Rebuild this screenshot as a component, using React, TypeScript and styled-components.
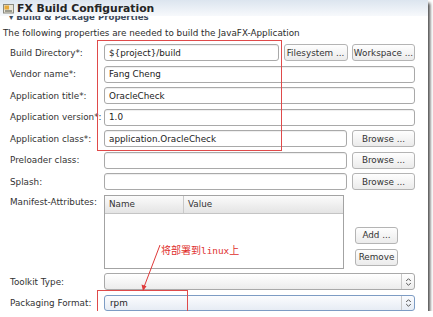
import React from "react";
import styled, { createGlobalStyle } from "styled-components";

const Global = createGlobalStyle`
  html, body { margin: 0; padding: 0; background: #fff; }
  body { font-family: "DejaVu Sans", sans-serif; }
`;

const Window = styled.div`
  position: relative;
  width: 428px;
  height: 311px;
  background: #fff;
  overflow: hidden;
  box-shadow: 2px 3px 3px rgba(0, 0, 0, 0.72);
  display: flex;
  flex-direction: column;
  font-family: "DejaVu Sans", sans-serif;
  font-size: 8.8px;
  color: #333;
`;

const Heading = styled.div`
  flex: none;
  height: 16px;
  display: flex;
  align-items: center;
  gap: 3px;
  padding-left: 3px;
  background: linear-gradient(#dce5ef, #f7f9fc);
  font-size: 10.8px;
  font-weight: bold;
  color: #252525;
`;

const SectionClip = styled.div`
  flex: none;
  height: 8px;
  overflow: hidden;
  padding-left: 9px;
`;

const SectionTitle = styled.div`
  margin-top: -4px;
  font-size: 8.6px;
  font-weight: bold;
  color: #3c4a5c;
  white-space: nowrap;
`;

const Description = styled.div`
  flex: none;
  margin-top: 3px;
  height: 12px;
  line-height: 12px;
  padding-left: 3px;
  color: #2c2c2c;
  white-space: nowrap;
`;

const Form = styled.div`
  margin-top: 5px;
  padding: 0 13px 0 10px;
  display: flex;
  flex-direction: column;
  gap: 4.5px;
`;

const Row = styled.div<{ $h?: number; $top?: boolean }>`
  display: grid;
  grid-template-columns: 94px 1fr;
  height: ${(p) => p.$h ?? 17}px;
  align-items: ${(p) => (p.$top ? "start" : "center")};
`;

const Label = styled.div<{ $pt?: number }>`
  white-space: nowrap;
  color: #333;
  padding-top: ${(p) => p.$pt ?? 0}px;
`;

const Field = styled.div<{ $gap?: number }>`
  display: flex;
  align-items: stretch;
  gap: ${(p) => p.$gap ?? 5}px;
  height: 100%;
  min-width: 0;
`;

const Input = styled.div`
  flex: 1;
  min-width: 0;
  box-sizing: border-box;
  border: 1px solid #a9a9a9;
  border-radius: 3px;
  background: #fff;
  box-shadow: inset 0 1px 1px rgba(0, 0, 0, 0.07);
  display: flex;
  align-items: center;
  padding-left: 4px;
  color: #222;
  white-space: nowrap;
  overflow: hidden;
`;

const Button = styled.div<{ $w: number }>`
  flex: none;
  width: ${(p) => p.$w}px;
  box-sizing: border-box;
  border: 1px solid #b4b4b4;
  border-radius: 3px;
  background: linear-gradient(#fefefe, #ebebeb);
  display: flex;
  align-items: center;
  justify-content: center;
  color: #333;
  white-space: nowrap;
`;

const SideButtons = styled.div`
  flex: none;
  width: 43px;
  display: flex;
  flex-direction: column;
  justify-content: flex-end;
  gap: 5px;
  padding-bottom: 3px;
`;

const SideButton = styled(Button)`
  height: 17px;
`;

const Table = styled.div`
  flex: none;
  width: 240px;
  box-sizing: border-box;
  border: 1px solid #a3a3a3;
  background: #fff;
  display: flex;
  flex-direction: column;
`;

const TableHead = styled.div`
  height: 17px;
  display: flex;
  background: linear-gradient(#fbfbfb, #e4e4e4);
  border-bottom: 1px solid #c4c4c4;
`;

const HeadCell = styled.div<{ $w?: number }>`
  ${(p) => (p.$w ? `width: ${p.$w}px; flex: none; border-right: 1px solid #c9c9c9;` : "flex: 1;")}
  display: flex;
  align-items: center;
  padding-left: 4px;
  box-sizing: border-box;
  color: #333;
`;

const Combo = styled.div<{ $focus?: boolean }>`
  flex: 1;
  box-sizing: border-box;
  border: 1px solid ${(p) => (p.$focus ? "#7d9cc4" : "#a9a9a9")};
  border-radius: 3px;
  background: ${(p) =>
    p.$focus ? "linear-gradient(#fbfcfe, #e6ecf4)" : "linear-gradient(#ffffff, #ececec)"};
  display: flex;
  align-items: stretch;
  color: #222;
`;

const ComboText = styled.div`
  flex: 1;
  display: flex;
  align-items: center;
  padding-left: 5px;
`;

const ComboArrow = styled.div`
  flex: none;
  width: 12px;
  border-left: 1px solid #c8c8c8;
  display: flex;
  align-items: center;
  justify-content: center;
`;

const Annot = styled.div<{ $x: number; $y: number; $w: number; $h: number }>`
  position: absolute;
  left: ${(p) => p.$x}px;
  top: ${(p) => p.$y}px;
  width: ${(p) => p.$w}px;
  height: ${(p) => p.$h}px;
  box-sizing: border-box;
  border: 1px solid #df4a4a;
  pointer-events: none;
`;

const Note = styled.div`
  position: absolute;
  left: 161px;
  top: 244px;
  font-family: "Noto Sans CJK SC", sans-serif;
  font-size: 10px;
  line-height: 12px;
  color: #e0302e;
  white-space: nowrap;
`;

const NoteMono = styled.span`
  font-family: "DejaVu Sans Mono", monospace;
  font-size: 9.4px;
`;

const ArrowSvg = styled.svg`
  position: absolute;
  left: 135px;
  top: 243px;
  pointer-events: none;
`;

const Arrows = () => (
  <svg width="7" height="10" viewBox="0 0 7 10">
    <path d="M1.2 4 L3.5 1.7 L5.8 4 M1.2 6 L3.5 8.3 L5.8 6" fill="none" stroke="#555" strokeWidth="1" />
  </svg>
);

const TitleIcon = () => (
  <svg width="11" height="11" viewBox="0 0 11 11">
    <rect x="0.5" y="1.5" width="10" height="8.5" fill="#e9e4d6" stroke="#8a8a80" />
    <rect x="1.5" y="2.5" width="4.5" height="4" fill="#e7a93a" />
    <rect x="2" y="7" width="7" height="2" fill="#9a9a8e" />
  </svg>
);

export default function App() {
  return (
    <>
      <Global />
      <Window>
        <Heading>
          <TitleIcon />
          <span>FX Build Configuration</span>
        </Heading>
        <SectionClip>
          <SectionTitle>▾ Build &amp; Package Properties</SectionTitle>
        </SectionClip>
        <Description>The following properties are needed to build the JavaFX-Application</Description>
        <Form>
          <Row>
            <Label>Build Directory*:</Label>
            <Field $gap={4.5}>
              <Input>{"${project}/build"}</Input>
              <Button $w={64}>Filesystem ...</Button>
              <Button $w={63}>Workspace ...</Button>
            </Field>
          </Row>
          <Row>
            <Label>Vendor name*:</Label>
            <Field>
              <Input>Fang Cheng</Input>
            </Field>
          </Row>
          <Row>
            <Label>Application title*:</Label>
            <Field>
              <Input>OracleCheck</Input>
            </Field>
          </Row>
          <Row>
            <Label>Application version*:</Label>
            <Field>
              <Input>1.0</Input>
            </Field>
          </Row>
          <Row>
            <Label>Application class*:</Label>
            <Field>
              <Input>application.OracleCheck</Input>
              <Button $w={63}>Browse ...</Button>
            </Field>
          </Row>
          <Row>
            <Label>Preloader class:</Label>
            <Field>
              <Input />
              <Button $w={63}>Browse ...</Button>
            </Field>
          </Row>
          <Row>
            <Label>Splash:</Label>
            <Field>
              <Input />
              <Button $w={63}>Browse ...</Button>
            </Field>
          </Row>
          <Row $h={74} $top>
            <Label $pt={2}>Manifest-Attributes:</Label>
            <Field $gap={11}>
              <Table>
                <TableHead>
                  <HeadCell $w={79}>Name</HeadCell>
                  <HeadCell>Value</HeadCell>
                </TableHead>
              </Table>
              <SideButtons>
                <SideButton $w={43}>Add ...</SideButton>
                <SideButton $w={43}>Remove</SideButton>
              </SideButtons>
            </Field>
          </Row>
          <Row>
            <Label>Toolkit Type:</Label>
            <Field>
              <Combo>
                <ComboText />
                <ComboArrow>
                  <Arrows />
                </ComboArrow>
              </Combo>
            </Field>
          </Row>
          <Row $h={16}>
            <Label>Packaging Format:</Label>
            <Field>
              <Combo $focus>
                <ComboText>rpm</ComboText>
                <ComboArrow>
                  <Arrows />
                </ComboArrow>
              </Combo>
            </Field>
          </Row>
        </Form>
        <Annot $x={97} $y={40} $w={185} $h={111} />
        <Annot $x={97} $y={290} $w={91} $h={24} />
        <Note>
          将部署到<NoteMono>linux</NoteMono>上
        </Note>
        <ArrowSvg width="30" height="50" viewBox="0 0 30 50">
          <path d="M25 2 L9 44" stroke="#df3a3a" strokeWidth="1" fill="none" />
          <path d="M8 48 L6.5 41.5 L11.5 43.3 Z" fill="#df3a3a" />
        </ArrowSvg>
      </Window>
    </>
  );
}
